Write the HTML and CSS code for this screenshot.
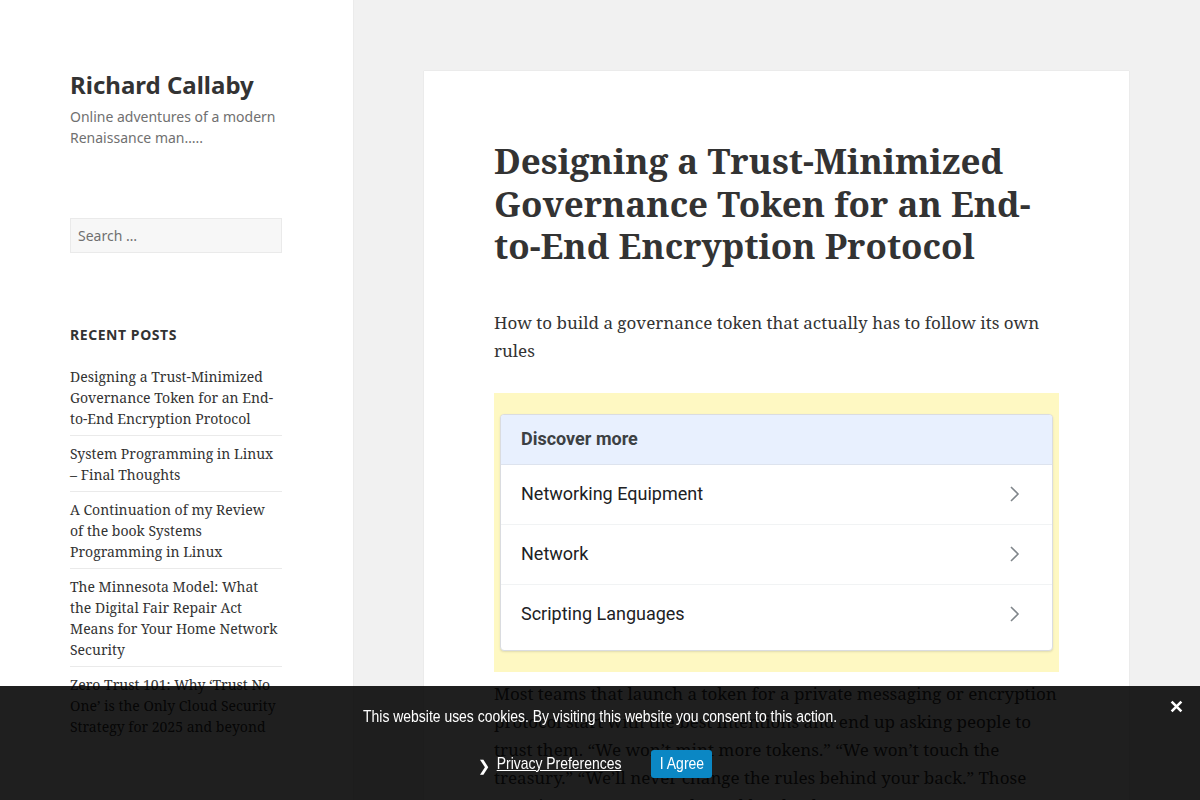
FILE: index.html
```html
<!DOCTYPE html>
<html lang="en">
<head>
  <meta charset="UTF-8" />
  <meta name="viewport" content="width=device-width, initial-scale=1.0"/>
  <title>Designing a Trust-Minimized Governance Token – Richard Callaby</title>
  <link rel="stylesheet" href="styles.css">
</head>
<body>

  <div class="page">

    <!-- Sidebar -->
    <aside class="sidebar">
      <header class="site-header">
        <p class="site-title"><a href="#">Richard Callaby</a></p>
        <p class="site-description">Online adventures of a modern Renaissance man…..</p>
      </header>

      <form class="search-form">
        <input type="search" class="search-field" placeholder="Search …">
      </form>

      <section class="widget">
        <h2 class="widget-title">Recent Posts</h2>
        <ul class="recent-posts">
          <li><a href="#">Designing a Trust-Minimized Governance Token for an End-to-End Encryption Protocol</a></li>
          <li><a href="#">System Programming in Linux – Final Thoughts</a></li>
          <li><a href="#">A Continuation of my Review of the book Systems Programming in Linux</a></li>
          <li><a href="#">The Minnesota Model: What the Digital Fair Repair Act Means for Your Home Network Security</a></li>
          <li><a href="#">Zero Trust 101: Why ‘Trust No One’ is the Only Cloud Security Strategy for 2025 and beyond</a></li>
        </ul>
      </section>
    </aside>

    <!-- Post -->
    <main class="content">
      <article class="post">
        <h1 class="entry-title">Designing a Trust-Minimized Governance Token for an End-to-End Encryption Protocol</h1>

        <div class="entry-content">
          <p>How to build a governance token that actually has to follow its own rules</p>

          <div class="related-box">
            <div class="related-card">
              <div class="related-head">Discover more</div>
              <a class="related-row" href="#">Networking Equipment
                <svg class="chev" viewBox="0 0 12 18" width="12" height="18"><path d="M2 2l7 7-7 7" fill="none" stroke="#80868b" stroke-width="1.6"/></svg>
              </a>
              <a class="related-row" href="#">Network
                <svg class="chev" viewBox="0 0 12 18" width="12" height="18"><path d="M2 2l7 7-7 7" fill="none" stroke="#80868b" stroke-width="1.6"/></svg>
              </a>
              <a class="related-row" href="#">Scripting Languages
                <svg class="chev" viewBox="0 0 12 18" width="12" height="18"><path d="M2 2l7 7-7 7" fill="none" stroke="#80868b" stroke-width="1.6"/></svg>
              </a>
            </div>
          </div>

          <p>Most teams that launch a token for a private messaging or encryption protocol start with the best intentions and end up asking people to trust them. “We won’t mint more tokens.” “We won’t touch the treasury.” “We’ll never change the rules behind your back.” Those promises are easy to make and hard to keep.</p>
        </div>
      </article>
    </main>
  </div>

  <!-- Cookie notice -->
  <div class="cookie-bar">
    <p class="cookie-text"><span class="narrow">This website uses cookies. By visiting this website you consent to this action.</span></p>
    <div class="cookie-actions">
      <a class="cookie-prefs" href="#"><span class="arrow">❯</span><span class="narrow link">Privacy Preferences</span></a>
      <button class="cookie-agree"><span class="narrow">I Agree</span></button>
    </div>
    <button class="cookie-close" aria-label="Close">
      <svg viewBox="0 0 12 12" width="13" height="13"><path d="M1.5 1.5l9 9M10.5 1.5l-9 9" stroke="#fff" stroke-width="2.4"/></svg>
    </button>
  </div>

</body>
</html>
```

FILE: styles.css
```css
body {
  margin: 0;
  background-color: #f1f1f1;
  color: #333;
  font-family: "Noto Serif", "DejaVu Serif", serif;
}

a {
  color: #333;
  text-decoration: none;
}

.page {
  display: flex;
  min-height: 100vh;
}

/* Sidebar */

.sidebar {
  flex: 0 0 353px;
  box-sizing: border-box;
  background: #fff;
  box-shadow: 0 0 1px rgba(0, 0, 0, 0.15);
  padding: 70px 71px 0 70px;
}

.site-title {
  margin: 0;
  font-family: "Noto Sans", sans-serif;
  font-size: 24px;
  font-weight: 700;
  line-height: 30px;
}

.site-description {
  margin: 6px 0 0;
  font-family: "Noto Sans", sans-serif;
  font-size: 14px;
  line-height: 21px;
  color: #707070;
}

.search-form {
  margin-top: 70px;
}

.search-field {
  box-sizing: border-box;
  width: 100%;
  height: 35px;
  padding: 0 7px;
  background: #f7f7f7;
  border: 1px solid #eaeaea;
  border-radius: 0;
  font-family: "Noto Sans", sans-serif;
  font-size: 14px;
  color: #333;
}

.search-field::placeholder {
  color: #707070;
}

.widget {
  margin-top: 71px;
}

.widget-title {
  margin: 0 0 21px;
  font-family: "Noto Sans", sans-serif;
  font-size: 14px;
  line-height: 21px;
  font-weight: 700;
  letter-spacing: 0.04em;
  text-transform: uppercase;
}

.recent-posts {
  list-style: none;
  margin: 0;
  padding: 0;
}

.recent-posts li {
  padding: 7px 4px 6px 0;
  border-top: 1px solid #eaeaea;
  font-size: 14px;
  line-height: 21px;
}

.recent-posts li:first-child {
  border-top: 0;
  padding-top: 0;
}

/* Post */

.content {
  flex: 1;
  padding: 71px;
}

.post {
  background: #fff;
  box-shadow: 0 0 1px rgba(0, 0, 0, 0.15);
  padding: 69px 70px 40px;
}

.entry-title {
  margin: 0;
  font-size: 35px;
  line-height: 42.5px;
  font-weight: 700;
}

.entry-content {
  margin-top: 41px;
  font-size: 17px;
  line-height: 28px;
}

.entry-content p {
  margin: 0 0 28px;
}

.related-box {
  background: #fef8c2;
  padding: 21px 6px;
  margin-bottom: 8px;
}

.related-card {
  background: #fff;
  border: 1px solid #dadce0;
  border-radius: 4px;
  box-shadow: 0 1px 2px rgba(60, 64, 67, 0.15);
  overflow: hidden;
  padding-bottom: 6px;
  font-family: Roboto, "Noto Sans", sans-serif;
}

.related-head {
  height: 49px;
  padding: 0 20px;
  display: flex;
  align-items: center;
  background: #e8f0fe;
  border-bottom: 1px solid #dde3ee;
  font-size: 18px;
  font-weight: 700;
  color: #3c4043;
}

.related-row {
  height: 59px;
  padding: 0 31px 0 20px;
  display: flex;
  align-items: center;
  justify-content: space-between;
  border-bottom: 1px solid #f1f3f4;
  font-size: 18px;
  color: #202124;
}

.related-row:last-child {
  border-bottom: 0;
}

/* Cookie notice */

.cookie-bar {
  position: fixed;
  left: 0;
  right: 0;
  bottom: 0;
  height: 114px;
  box-sizing: border-box;
  padding-top: 20px;
  background: rgba(0, 0, 0, 0.88);
  font-family: "Liberation Sans", Arial, sans-serif;
  color: #fff;
  text-align: center;
}

/* narrow face: squeeze the Arial-width font sideways */
.narrow {
  display: inline-block;
  transform: scaleX(0.82);
}

.cookie-text {
  margin: 0;
  font-size: 17px;
  line-height: 22px;
  white-space: nowrap;
}

.cookie-text .narrow {
  margin: 0 -50px;
}

.cookie-actions {
  margin-top: 22px;
  display: flex;
  justify-content: center;
  align-items: center;
  gap: 27px;
  padding-right: 10px;
}

.cookie-prefs {
  color: #fff;
  font-size: 17px;
  display: flex;
  align-items: center;
  white-space: nowrap;
}

.cookie-prefs .arrow {
  font-family: "DejaVu Sans", sans-serif;
  font-weight: 700;
  font-size: 15px;
  margin-right: -7px;
  margin-top: 3px;
}

.cookie-prefs .link {
  text-decoration: underline;
  margin-right: -11px;
}

.cookie-agree {
  width: 61px;
  height: 28px;
  padding: 0;
  border: none;
  border-radius: 3px;
  background: #0b87c4;
  color: #fff;
  font-family: inherit;
  font-size: 17px;
  white-space: nowrap;
  cursor: pointer;
}

.cookie-close {
  position: absolute;
  top: 14px;
  right: 17px;
  padding: 0;
  background: none;
  border: none;
  cursor: pointer;
}
```
